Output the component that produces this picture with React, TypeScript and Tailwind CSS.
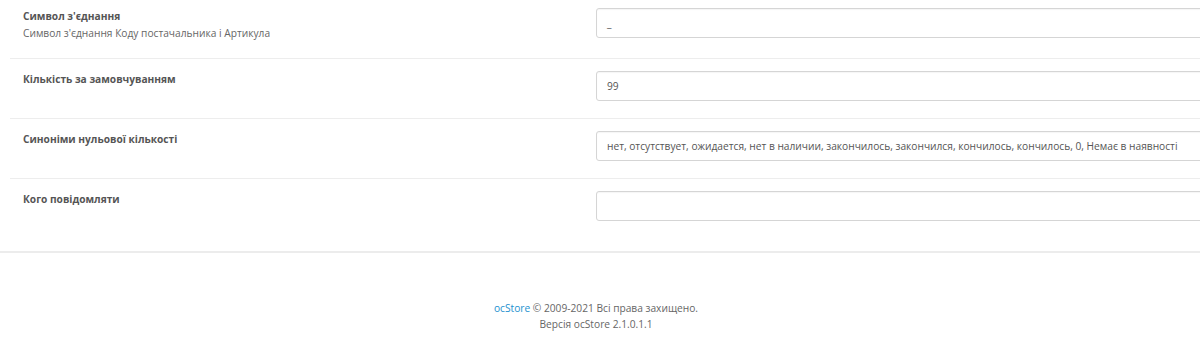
import React from 'react';

interface RowProps {
  label: string;
  help?: string;
  value: string;
  first?: boolean;
}

// page was captured at ~85% zoom, so sizes are scaled (12px -> 10.2px)
const Row: React.FC<RowProps> = ({ label, help, value, first }) => {
  return (
    <div className={`flex items-start ${first ? 'h-[58px] pt-[8px]' : 'h-[60px] border-t border-[#ededed] pt-[12px]'}`}>
      <div className="w-[586px] shrink-0 pl-[13px] pt-[1px]">
        <div className="text-[10.2px] font-bold leading-[14px] text-[#555]">{label}</div>
        {help && <div className="mt-[3px] text-[10.2px] leading-[14px] text-[#666]">{help}</div>}
      </div>
      <div className="h-[30px] w-[640px] shrink-0 whitespace-nowrap rounded-[3px] border border-[#d5d5d5] bg-white px-[10px] text-[10.2px] leading-[28px] text-[#555] shadow-[inset_0_1px_1px_rgba(0,0,0,0.04)]">
        {value}
      </div>
    </div>
  );
};

const App: React.FC = () => {
  return (
    <div className="h-[345px] w-[1200px] overflow-hidden bg-white font-['Open_Sans',sans-serif] text-[10.2px] text-[#666]">
      <div className="border-b-2 border-[#ececec] pb-[13px]">
        <div className="ml-[10px]">
          <Row first label="Символ з'єднання" help="Символ з'єднання Коду постачальника і Артикула" value="_" />
          <Row label="Кількість за замовчуванням" value="99" />
          <Row
            label="Синоніми нульової кількості"
            value="нет, отсутствует, ожидается, нет в наличии, закончилось, закончился, кончилось, кончилось, 0, Немає в наявності"
          />
          <Row label="Кого повідомляти" value="" />
        </div>
      </div>
      <footer className="w-[1192px] pt-[47px] text-center leading-[16px] text-[#666]">
        <div>
          <a href="#" className="text-[#1e91cf]">ocStore</a> © 2009-2021 Всі права захищено.
        </div>
        <div>Версія ocStore 2.1.0.1.1</div>
      </footer>
    </div>
  );
};

export default App;
